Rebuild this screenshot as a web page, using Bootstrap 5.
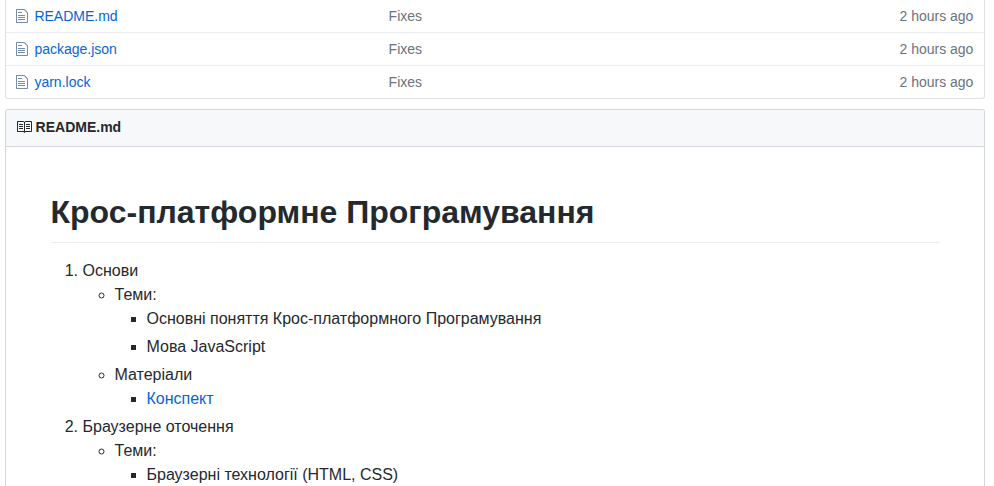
<!DOCTYPE html>
<html lang="uk">
<head>
<meta charset="utf-8">
<meta name="viewport" content="width=device-width, initial-scale=1">
<title>README.md</title>
<link href="https://cdn.jsdelivr.net/npm/bootstrap@5.3.0/dist/css/bootstrap.min.css" rel="stylesheet">
<style>
body{font-family:"Liberation Sans",Arial,sans-serif;font-size:14px;line-height:1.5;color:#24292e}
.repo{width:980px;height:486px;margin-left:5px}
a{color:#0366d6;text-decoration:none}
.files{border:1px solid #dfe2e5;border-top:0;border-radius:0 0 3px 3px}
.file-row{height:33px;line-height:20px;padding:6px 10.6px 6px 10px;border-bottom:1px solid #eaecef;color:#6a737d}
.file-row:last-child{height:32px;border-bottom:0}
.file-row svg{fill:rgba(3,47,98,.55);margin-top:2px;margin-right:6.4px}
.file-name{width:372.6px}
.readme{margin-top:10px;border:1px solid #d4d8dc;border-bottom:0;border-radius:3px 3px 0 0}
.readme-title{height:37px;padding:9px 10px;background:#f6f8fa;border-bottom:1px solid #d4d8dc;border-radius:2px 2px 0 0;font-size:14px;line-height:17px;margin:0}
.readme-title svg{fill:#24292e;margin-right:3.6px}
.markdown{padding:45px 45px 0;font-size:16px}
.markdown h1{font-size:32px;font-weight:600;line-height:1.25;padding-bottom:.3em;margin-bottom:16px;border-bottom:1px solid #eaecef;text-indent:-.5px}
.markdown ol,.markdown ul{padding-left:2em;margin:0}
.markdown ol{padding-left:31.5px}
.markdown li+li{margin-top:.25em}
</style>
<script src="https://cdn.jsdelivr.net/npm/bootstrap@5.3.0/dist/js/bootstrap.bundle.min.js"></script>
</head>
<body>
<svg class="d-none"><symbol id="file" viewBox="0 0 12 16"><path fill-rule="evenodd" d="M6 5H2V4h4v1zM2 8h7V7H2v1zm0 2h7V9H2v1zm0 2h7v-1H2v1zm10-7.5V14c0 .55-.45 1-1 1H1c-.55 0-1-.45-1-1V2c0-.55.45-1 1-1h7.5L12 4.5zM11 5L8 2H1v12h10V5z"/></symbol></svg>
<main class="repo overflow-hidden">
  <div class="files">
    <div class="file-row d-flex"><div class="file-name d-flex"><svg width="12" height="16"><use href="#file"/></svg><a href="#">README.md</a></div><span>Fixes</span><span class="ms-auto">2 hours ago</span></div>
    <div class="file-row d-flex"><div class="file-name d-flex"><svg width="12" height="16"><use href="#file"/></svg><a href="#">package.json</a></div><span>Fixes</span><span class="ms-auto">2 hours ago</span></div>
    <div class="file-row d-flex"><div class="file-name d-flex"><svg width="12" height="16"><use href="#file"/></svg><a href="#">yarn.lock</a></div><span>Fixes</span><span class="ms-auto">2 hours ago</span></div>
  </div>
  <section class="readme">
    <h3 class="readme-title d-flex fw-bold"><svg width="16" height="16" viewBox="0 0 16 16"><path fill-rule="evenodd" d="M3 5h4v1H3V5zm0 3h4V7H3v1zm0 2h4V9H3v1zm11-5h-4v1h4V5zm0 2h-4v1h4V7zm0 2h-4v1h4V9zm2-6v9c0 .55-.45 1-1 1H9.5l-1 1-1-1H2c-.55 0-1-.45-1-1V3c0-.55.45-1 1-1h5.5l1 1 1-1H15c.55 0 1 .45 1 1zm-8 .5L7.5 3H2v9h6V3.5zm7-.5H9.5l-.5.5V12h6V3z"/></svg><span>README.md</span></h3>
    <article class="markdown">
      <h1>Крос-платформне Програмування</h1>
      <ol>
        <li>Основи
          <ul>
            <li>Теми:
              <ul><li>Основні поняття Крос-платформного Програмування</li><li>Мова JavaScript</li></ul>
            </li>
            <li>Матеріали
              <ul><li><a href="#">Конспект</a></li></ul>
            </li>
          </ul>
        </li>
        <li>Браузерне оточення
          <ul>
            <li>Теми:
              <ul><li>Браузерні технології (HTML, CSS)</li></ul>
            </li>
          </ul>
        </li>
      </ol>
    </article>
  </section>
</main>
</body>
</html>
